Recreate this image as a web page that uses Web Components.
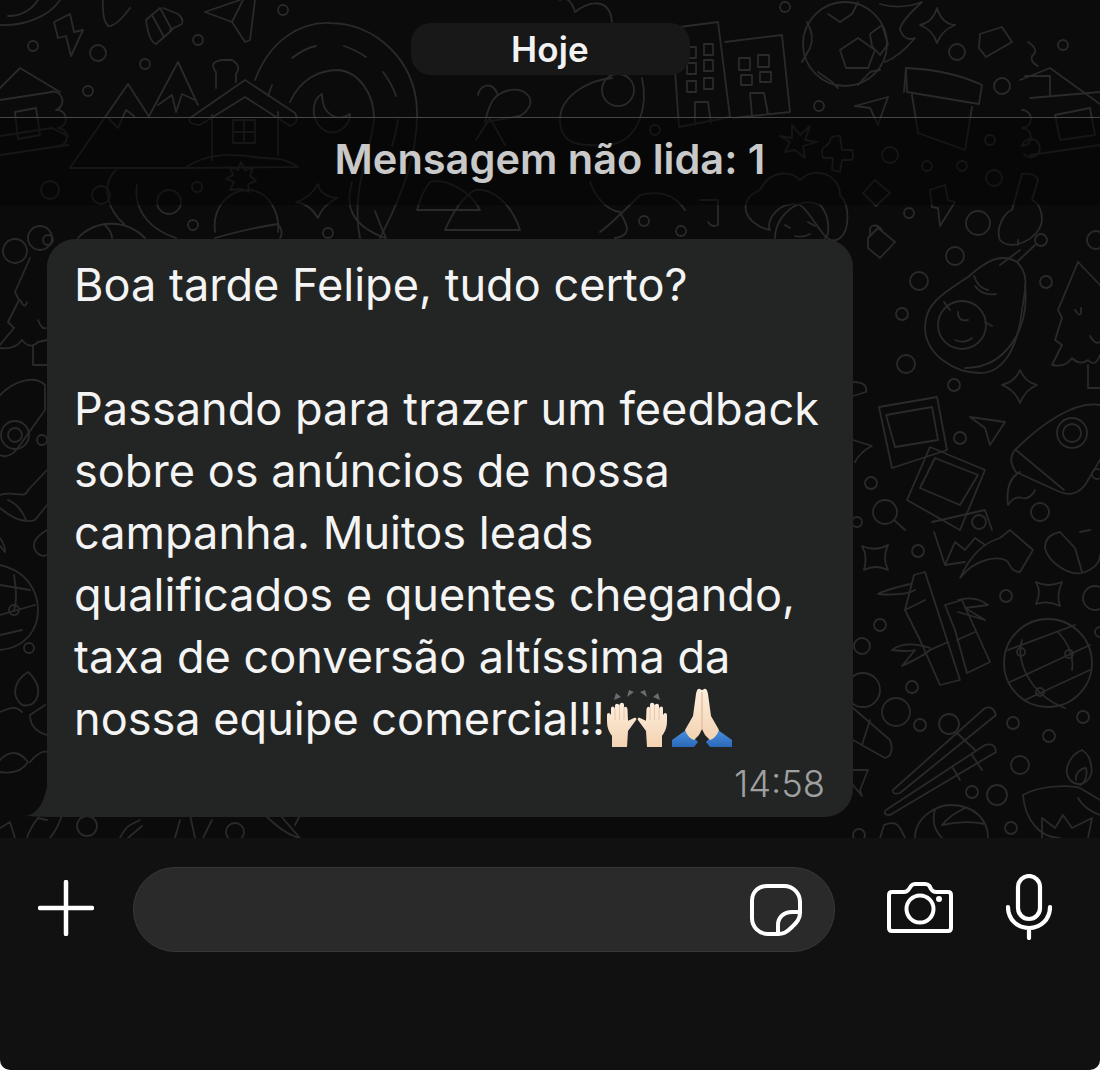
<!DOCTYPE html>
<html lang="pt">
<head>
<meta charset="utf-8">
<title>Chat</title>
<style>
  html, body { margin: 0; padding: 0; background: #fff; }
  body { font-family: "Inter", "Liberation Sans", sans-serif; width: 1100px; height: 1070px; overflow: hidden; }
</style>
</head>
<body>
<chat-screen>
  <date-chip>Hoje</date-chip>
  <unread-banner>Mensagem não lida: 1</unread-banner>
  <message-bubble time="14:58">Boa tarde Felipe, tudo certo?<br><br>Passando para trazer um feedback<br>sobre os anúncios de nossa<br>campanha. Muitos leads<br>qualificados e quentes chegando,<br>taxa de conversão altíssima da<br>nossa equipe comercial!!<hands-emoji></hands-emoji><pray-emoji></pray-emoji></message-bubble>
</chat-screen>
<composer-bar></composer-bar>

<script>
// wallpaper doodles, coords are page pixels
const dots = [
  [33,46,5],[98,53,8],[198,40,5],[145,64,5],[88,91,5],[283,10,5],[50,190,9],[101,195,9],[197,187,5],[193,225,5],[40,238,12],[328,233,5],[169,202,12],
  [819,106,5],[957,52,8],[1063,45,5],[785,7,5],[1002,86,8],[890,155,8],[927,166,5],[962,166,5],[994,178,8],[990,140,5],[909,213,5],[978,223,12],[644,221,5],[681,231,5],[655,130,5],
  [955,256,9],[919,281,9],[902,314,6],[906,364,9],[954,385,6],[1046,282,6],[1096,240,9],[960,438,6],[871,483,6],[1040,512,9],[857,522,5],[1097,474,5],
  [918,551,6],[880,625,6],[862,646,8],[863,690,17],[896,712,14],[912,687,6],[949,724,10],[920,725,6],[1006,596,6],[1013,723,6],[1049,736,6],[1083,717,6],[1020,765,9],[972,792,6],[997,795,10],[1011,828,6],[859,835,6],[1095,598,12],[1100,632,5],
  [42,440,5],[29,648,5],[87,826,10],[235,832,9],[15,251,12],[48,240,5]
];
const lines = [
  // top left banana and bow
  "M0 25C22 26 48 18 60 0","M8 16C20 16 30 12 38 0",
  "M103 0Q102 20 108 26Q116 27 130 8","M146 20L160 8L172 30L156 44Q149 42 146 20Z","M152 15L164 37","M163 8L178 14Q184 19 182 24L170 30","M205 12L240 0M205 12L232 22L245 42L250 40L255 0M232 22L243 0",
  "M54 22L70 14L74 32L83 30L71 56L66 36L58 38Z",
  // left cabin
  "M0 88L20 68L60 92M0 100L52 92M0 136L52 128L68 136M0 155L68 145M15 112L36 108L40 135L18 139Z",
  "M50 92a9 9 0 1 1 6 18a9 9 0 1 1 2 18a9 9 0 1 1 0 18",
  // mountains and snow house
  "M70 168L128 84L148 115M148 118L178 62L198 105M70 168H185","M108 118L118 128L126 110L134 116M158 105L172 95L176 112L182 94L195 100",
  "M190 118L245 80L295 113Q300 122 290 126L245 97L200 125Q187 124 190 118Z","M212 115V160M278 112V155","M233 120H255V143H233ZM244 120V143M233 132H255",
  "M216 88V72Q208 62 222 60H232Q242 66 236 74V82","M185 168C210 150 240 155 255 157C270 160 280 155 298 167Z",
  // big spiral with moon
  "M255 80C270 40 300 22 330 23C375 23 415 60 417 110C418 150 405 190 380 238","M292 58Q305 48 316 46M344 46Q356 50 366 57M383 72Q392 84 396 96M398 120Q396 134 392 146",
  "M290 102C300 80 318 70 338 70C360 72 374 95 374 118C372 150 350 190 360 238","M272 85L268 96","M322 94C310 100 310 125 328 132C340 134 350 125 350 114C338 122 322 116 322 94Z",
  "M352 182C345 205 350 225 385 238","M375 211Q380 225 386 238",
  // hat, star, sunhat behind banner
  "M215 232C212 208 228 190 248 190C268 190 280 212 278 232M215 238Q250 228 278 224Q284 232 280 238","M230 190l4-8l-8-3l7-4l-3-8l8 3l3-8l4 8l8-2l-3 8l6 5l-8 3l1 8l-8-3Z",
  "M318 184Q310 198 296 202Q310 204 318 218Q322 206 337 198Q320 196 318 184Z","M137 185C134 200 140 226 176 238","M116 170C100 185 108 210 124 224",
  "M78 238C95 220 125 218 145 238M105 225Q112 232 112 238",
  "M417 210H480C470 190 445 178 430 182Q422 192 417 210ZM445 230H520C510 200 490 188 475 190Q458 200 445 230Z",
  // top center plant
  "M478 95C480 85 492 80 498 95C520 80 545 100 520 116L485 122M485 122Q490 100 498 95","M476 140L490 118L505 145",
  // avocado behind chip
  "M560 0Q570 -5 575 12C590 0 610 -2 612 22","M612 78C590 80 560 95 560 120C560 150 590 145 610 145C640 140 648 105 642 78","M618 90m-16 0a16 16 0 1 0 32 0a16 16 0 1 0 -32 0",
  // figure under unread text
  "M590 182C595 195 605 210 620 212C625 222 635 235 615 238M640 195C660 190 675 195 685 210M600 232C610 225 620 215 640 195","M700 200H718V225Q712 228 708 222",
  // buildings
  "M672 28L718 22L730 117L679 127Z","M725 42L782 35L790 112L733 118","M687 47H696V58H687ZM704 44H713V55H704ZM687 63H696V74H687ZM704 60H713V71H704ZM687 81H696V92H687ZM704 78H713V89H704Z","M739 58H750V70H739ZM758 55H769V67H758ZM741 75H752V85H741ZM760 72H771V82H760Z","M695 125V102H708L711 123M752 116L750 93H764L768 114",
  // soccer ball
  "M845 44m-42 0a42 42 0 1 0 84 0a42 42 0 1 0 -84 0","M828 14L840 22L852 14L858 2M807 22Q815 36 810 48L802 62M870 34L882 25L888 44L880 55L872 46ZM818 72L832 82L838 88M858 85L870 72L880 70","M840 50L858 38L875 50L868 68H846Z",
  "M880 4Q900 10 922 2Q900 22 900 30Q905 42 915 38Q900 56 885 62",
  // star, box, zigzag
  "M937 8Q942 24 955 25Q942 30 937 43Q933 30 920 25Q933 22 937 8Z","M980 34L1002 27L1012 42L986 57L979 48Z","M1028 42Q1040 50 1032 56Q1030 62 1038 66",
  // pot
  "M906 68Q950 70 982 85L979 104L907 92Z","M906 68L904 92M912 95L918 133L965 150L972 107",
  "M855 106L888 97L878 125L870 108Z",
  // right cabin
  "M1020 80L1050 68L1100 104M1025 76H1050V95M1030 98L1100 92M1055 115L1090 108L1095 135L1060 140ZM1030 155L1100 145",
  "M1022 110a9 9 0 1 1 0 18a9 9 0 1 1 0 18a9 9 0 1 1 2 8",
  // asterisk, plus, diamond, lightning, key
  "M792 125L800 135L810 126L805 140L817 142L803 146L805 158L795 150L785 152L790 142L780 136L792 138Z",
  "M830 142Q830 135 840 136L842 150H852Q855 160 850 160H842L840 172L832 170L833 158H823Q820 148 826 146Z",
  "M875 180L890 193L876 206L863 193Z","M930 190L945 185L948 200L955 202L940 226L938 208L932 207Z",
  "M1022 174Q1035 172 1038 180L1032 200Q1042 205 1042 220C1040 240 1010 252 1000 240C995 228 1005 212 1012 210Z","M1018 245L1018 240m2 10L1000 265",
  // flower face
  "M760 190C770 170 790 170 800 180C815 165 840 175 840 195C850 205 850 230 840 238C825 250 815 215 800 205C780 200 765 220 770 230C745 225 735 200 760 190Z","M775 238C775 215 800 195 820 205C830 215 830 235 825 238","M785 225L790 228M808 222L815 226","M795 236Q803 238 810 234",
  "M868 238L878 228L895 242L880 258L868 248ZM870 236V228Q875 222 882 230",
  // avocado
  "M1017 262C1000 252 985 262 968 277C940 295 925 305 925 327C925 355 955 373 980 373C1005 373 1018 345 1022 310C1025 290 1030 275 1017 262Z","M1025 285C1030 330 1005 368 965 368","M962 325m-24 0a24 24 0 1 0 48 0a24 24 0 1 0 -48 0","M1017 262L1035 245","M1041 240m-6 0a6 6 0 1 0 12 0a6 6 0 1 0 -12 0",
  "M974 276Q978 288 988 290M975 286Q982 296 996 294M958 312Q958 322 968 320M955 340Q965 344 972 338","M944 302L950 310M985 322L992 326",
  // right tree
  "M1078 262L1058 310L1062 318L1055 340L1062 345L1052 365Q1065 368 1072 358Q1080 366 1088 360Q1095 368 1100 355","M1088 365V388H1100","M1078 262L1100 285","M1075 310Q1082 320 1081 308M1090 336Q1095 345 1100 342",
  // star and plane
  "M1020 370Q1025 382 1037 385Q1025 390 1020 403Q1015 390 1002 385Q1015 382 1020 370Z","M970 417L1005 422L990 445L985 428Z",
  // polaroids
  "M879 407L937 397L947 450L892 468Z","M886 415L932 407L938 440L895 447Z","M930 447L985 470L960 530L907 500Z","M935 458L978 475L960 505L920 488Z",
  // rocket
  "M1100 405C1075 400 1040 425 1015 450Q1007 460 1016 472L1060 492Q1075 498 1085 485L1100 460","M1016 450L1064 490","M1072 433m-15 0a15 15 0 1 0 30 0a15 15 0 1 0 -30 0M1072 433m-9 0a9 9 0 1 0 18 0a9 9 0 1 0 -18 0",
  "M1020 472Q1005 480 1008 505Q1015 495 1022 498Q1030 500 1035 490","M885 512m-12 0a12 12 0 1 0 24 0a12 12 0 1 0 -24 0M894 520L905 530","M932 522L985 510L992 530","M979 522m-7 0a7 7 0 1 0 14 0a7 7 0 1 0 -14 0",
  // picture with arrow
  "M934 532L945 565L965 562M945 565L955 542L965 550L975 538L985 545","M960 578C975 558 1000 555 1008 562Q1012 572 1020 572L1033 550L1010 530L1000 538Q975 545 960 578Z",
  "M1060 532Q1045 535 1045 548C1048 562 1070 578 1085 572C1095 568 1100 562 1100 555M1060 532L1075 548L1082 572M1080 532L1090 530",
  // small stars
  "M862 546Q875 552 888 545Q882 558 888 570Q875 564 864 570Q868 556 862 546Z","M1036 582Q1048 588 1062 582Q1056 596 1060 606Q1048 600 1036 604Q1042 592 1036 582Z","M853 770H868L860 790L862 796L853 785","M853 440L872 446Q860 452 855 462","M853 382Q868 382 866 392L853 396",
  // bamboo
  "M914 575L925 572L960 680L940 685L920 640L905 610Z","M905 610L925 600M930 650L948 642","M910 584Q885 590 878 594Q905 596 915 590","M945 605L962 600L990 662L967 673L955 630Z","M957 640L975 632","M958 600Q975 595 988 605L965 608L985 620L958 612","M930 648Q905 640 892 650Q908 652 915 650L902 666Q925 655 930 650",
  // globe
  "M1048 663m-44 0a44 44 0 1 0 88 0a44 44 0 1 0 -88 0","M1008 650L1075 625M1010 682L1090 645M1025 700L1090 670M1022 640C1015 660 1030 695 1065 708M1058 632Q1075 650 1072 670","M1021 652m-4 0a4 4 0 1 0 8 0a4 4 0 1 0 -8 0M1069 654m-4 0a4 4 0 1 0 8 0a4 4 0 1 0 -8 0M1040 692m-4 0a4 4 0 1 0 8 0a4 4 0 1 0 -8 0",
  // chopsticks, sushi
  "M893 790L985 708Q993 705 996 715L900 793Q892 795 893 790Z","M957 733L975 750M886 810L985 745Q995 742 996 752L890 815Q882 815 886 810Z","M953 768L960 780M972 755L982 770",
  "M853 708L890 740Q895 755 885 758L853 740M870 720L862 745",
  // diya
  "M1023 795C1040 785 1070 785 1080 788M1023 795C1025 820 1040 838 1060 838M1080 788L1100 800M1078 798Q1085 810 1100 815","M1082 750C1070 755 1062 770 1070 780C1080 790 1095 780 1091 765C1090 755 1085 752 1082 750Z","M1076 780C1075 772 1082 768 1086 768C1088 775 1084 785 1080 785",
  "M1042 838L1042 818L1055 828L1063 815L1072 828L1092 818L1088 838",
  "M915 838C915 815 940 805 950 805C975 805 988 820 988 838M935 810Q930 825 942 838M965 808Q950 815 942 825Q965 820 985 824","M880 838L884 825Q895 820 900 828L905 838",
  // left column
  "M30 258L15 292L19 300L8 322L14 328L0 345M0 348Q15 350 22 340Q30 350 38 342L47 340M33 345V365H47","M20 300Q25 310 27 302M38 320Q42 330 46 328",
  "M0 395C15 380 35 375 45 385V410L20 445Q10 460 0 455","M15 435m-14 0a14 14 0 1 0 28 0a14 14 0 1 0 -28 0M15 435m-7 0a7 7 0 1 0 14 0a7 7 0 1 0 -14 0",
  "M0 495C15 490 25 500 28 490L47 470M0 508Q20 525 35 520L47 505M8 500Q20 505 26 520","M0 538Q5 545 5 552L0 546","M47 530Q30 540 35 550Q40 558 47 555",
  "M0 565C25 570 38 590 38 610C38 630 25 648 0 650","M0 585L30 590M0 615L35 605M0 635L22 630M14 575Q18 600 14 610","M14 610m-5 0a5 5 0 1 0 10 0a5 5 0 1 0 -10 0",
  "M28 672C15 680 10 695 22 705C35 708 42 695 36 682Q32 675 28 672Z","M0 712C10 708 15 705 22 712M45 705L30 715Q30 730 47 735","M0 760Q15 745 28 762Q20 775 0 772M30 762Q40 750 47 752",
  "M27 838Q30 828 38 818L47 820M62 815Q58 828 50 838M15 838L10 822L0 828","M120 838Q125 828 130 825L140 820M128 838L142 826M175 838L180 820M190 815L195 838M203 838L212 820",
  "M265 815Q285 835 300 838M280 815L300 838M300 815L295 825"
];
const wallSvg = `<svg width="1100" height="838" viewBox="0 0 1100 838" fill="none" stroke="#2a2a2a" stroke-width="1.800" stroke-linecap="round" stroke-linejoin="round">
  ${dots.map(d => `<circle cx="${d[0]}" cy="${d[1]}" r="${d[2]}"/>`).join("")}
  ${lines.map(d => `<path d="${d}"/>`).join("")}
</svg>`;

class ChatScreen extends HTMLElement {
  constructor() {
    super();
    this.attachShadow({ mode: "open" }).innerHTML = `
    <style>
      :host { display: block; position: relative; height: 838px; overflow: hidden; background: #0b0b0b; }
      .wall { position: absolute; inset: 0; }
      .wall svg { display: block; }
      .content { position: relative; display: flex; flex-direction: column; padding-top: 23px; }
    </style>
    <div class="wall">${wallSvg}</div>
    <div class="content"><slot></slot></div>`;
  }
}

class DateChip extends HTMLElement {
  constructor() {
    super();
    this.attachShadow({ mode: "open" }).innerHTML = `
    <style>
      :host { display: flex; align-self: center; align-items: center; justify-content: center; width: 279px; height: 52px; margin-bottom: 42px;
        border-radius: 20px; background: #181818; color: #f2f2f2; font: 600 35px "Inter", "Liberation Sans", sans-serif; letter-spacing: .2px; }
    </style>
    <slot></slot>`;
  }
}

class UnreadBanner extends HTMLElement {
  constructor() {
    super();
    this.attachShadow({ mode: "open" }).innerHTML = `
    <style>
      :host { display: flex; align-items: center; justify-content: center; box-sizing: border-box; height: 88px; margin-bottom: 34px; padding-bottom: 5px;
        border-top: 1.5px solid #474747; background: rgba(5,5,5,.55); color: #c9c9c9;
        font: 600 41.500px "Inter", "Liberation Sans", sans-serif; }
    </style>
    <slot></slot>`;
  }
}

class MessageBubble extends HTMLElement {
  constructor() {
    super();
    this.attachShadow({ mode: "open" }).innerHTML = `
    <style>
      :host { display: block; position: relative; box-sizing: border-box; width: 806px; height: 578px; margin-left: 47px;
        padding: 15px 0 0 27px; border-radius: 28px; background: #232525; color: #f4f4f4;
        font: 400 45.100px/62px "Inter", "Liberation Sans", sans-serif; white-space: nowrap; }
      .time { position: absolute; right: 28px; bottom: 13px; font: 300 36.300px/40px "Inter", "Liberation Sans", sans-serif; color: #a0a0a0; }
      .tail { position: absolute; left: -21px; bottom: 0; display: block; }
    </style>
    <svg class="tail" width="50" height="50" viewBox="0 0 50 50"><path d="M0 49Q15 47 21 20V0H50V50H30Q14 50 0 49Z" fill="#232525"/></svg>
    <slot></slot>
    <span class="time"></span>`;
    this.shadowRoot.querySelector(".time").textContent = this.getAttribute("time");
  }
}

// emoji sit on the baseline without growing the line box
class HandsEmoji extends HTMLElement {
  constructor() {
    super();
    this.attachShadow({ mode: "open" }).innerHTML = `
    <style>
      :host { display: inline-block; width: 60px; height: 60px; margin: -47px 0 -13px 2px; }
      svg { display: block; }
    </style>
    <svg width="60" height="60" viewBox="0 0 60 60">
      <defs><linearGradient id="h" x1="0" y1="0" x2="0" y2="1"><stop offset="0" stop-color="#fdeedd"/><stop offset="1" stop-color="#f3d3b2"/></linearGradient></defs>
      <path d="M7 12L9 5L14 9ZM20 9L22 2L27 4ZM33 4L38 2L40 9ZM46 9L51 5L53 12Z" fill="#6a6c6e"/>
      <g transform="translate(0 3.800) scale(1 .936)">
        <path d="M5 59V47C1 41 0 37 0 30V25C0 22 3 22 4 25V18C4 15 7 15 8 18V15C8 12 12 12 12.500 15V14C13 11 17 11 17 14V17C18 15 20.500 16 20.500 19L21 31L27 28C29.500 27 30 29.500 28.500 31L21 42L20 59Z" fill="url(#h)"/>
        <path d="M55 59V47C59 41 60 37 60 30V25C60 22 57 22 56 25V18C56 15 53 15 52 18V15C52 12 48 12 47.500 15V14C47 11 43 11 43 14V17C42 15 39.500 16 39.500 19L39 31L33 28C30.500 27 30 29.500 31.500 31L39 42L40 59Z" fill="url(#h)"/>
        <path d="M8 18V30M12.500 15V30M17 16V30M52 18V30M47.500 15V30M43 16V30" stroke="#e0bd9c" stroke-width=".8" fill="none"/>
      </g>
    </svg>`;
  }
}

class PrayEmoji extends HTMLElement {
  constructor() {
    super();
    this.attachShadow({ mode: "open" }).innerHTML = `
    <style>
      :host { display: inline-block; width: 60px; height: 60px; margin: -47px 0 -13px 5px; }
      svg { display: block; }
    </style>
    <svg width="60" height="60" viewBox="0 0 60 60">
      <defs><linearGradient id="s" x1="0" y1="0" x2="0" y2="1"><stop offset="0" stop-color="#4a90de"/><stop offset="1" stop-color="#2a69b8"/></linearGradient>
      <linearGradient id="k" x1="0" y1="0" x2="0" y2="1"><stop offset="0" stop-color="#fdeedd"/><stop offset="1" stop-color="#f3d3b2"/></linearGradient></defs>
      <path d="M0 59V52L14 42L26 54L22 59Z" fill="url(#s)"/>
      <path d="M60 59V52L46 42L34 54L38 59Z" fill="url(#s)"/>
      <path d="M28 1Q25 0 24 6L21 28L13 42Q16 50 22 52L27 47L30 41L33 47L38 52Q44 50 47 42L39 28L36 6Q35 0 32 1Q30 3 28 1Z" fill="url(#k)"/>
      <path d="M30 4V41" stroke="#dcb090" stroke-width="1" fill="none"/>
    </svg>`;
  }
}

class ComposerBar extends HTMLElement {
  constructor() {
    super();
    this.attachShadow({ mode: "open" }).innerHTML = `
    <style>
      :host { display: block; box-sizing: border-box; height: 232px; padding-top: 29px; background: #111; border-radius: 0 0 10px 10px; }
      .row { display: flex; align-items: flex-start; }
      svg { display: block; flex: none; fill: none; stroke: #fff; stroke-linecap: round; stroke-linejoin: round; }
      .plus { margin: 13px 39px 0 38px; }
      .field { flex: none; box-sizing: border-box; display: flex; justify-content: flex-end; width: 702px; height: 85px; padding: 16px 32px 0 0;
        border: 1px solid #383838; border-radius: 42px; background: #2a2a2a; }
      .camera { margin: 15px 0 0 52px; }
      .mic { margin: 7px 0 0 53px; }
    </style>
    <div class="row">
      <svg class="plus" width="56" height="56" viewBox="0 0 56 56" stroke-width="4.500"><path d="M28 2V54M2 28H54"/></svg>
      <div class="field">
        <svg width="52" height="52" viewBox="0 0 52 52" stroke-width="4"><path d="M17 2H34C43 2 50 9 50 18V29C50 35 47 38 42 43C36 49 33 50 28 50H18C9 50 2 43 2 34V17C2 8 8 2 17 2Z"/><path d="M49 28H42C34 28 28 33 28 41V50"/></svg>
      </div>
      <svg class="camera" width="66" height="52" viewBox="0 0 66 52" stroke-width="4"><path d="M5 10H17Q20 10 22 7L24 4Q25.500 2 28 2H38Q41 2 42.500 4L44 7Q46 10 49 10H61Q64 10 64 13V46Q64 49 61 49H5Q2 49 2 46V13Q2 10 5 10Z"/><circle cx="33" cy="27" r="13.500"/><circle cx="52" cy="17" r="3" fill="#fff" stroke="none"/></svg>
      <svg class="mic" width="46" height="66" viewBox="0 0 46 66" stroke-width="4.200"><rect x="12" y="2" width="22" height="43" rx="11"/><path d="M2 33C2 45 11 54 23 54C35 54 44 45 44 33M23 54V64" /></svg>
    </div>`;
  }
}

customElements.define("chat-screen", ChatScreen);
customElements.define("date-chip", DateChip);
customElements.define("unread-banner", UnreadBanner);
customElements.define("message-bubble", MessageBubble);
customElements.define("hands-emoji", HandsEmoji);
customElements.define("pray-emoji", PrayEmoji);
customElements.define("composer-bar", ComposerBar);
</script>
</body>
</html>
